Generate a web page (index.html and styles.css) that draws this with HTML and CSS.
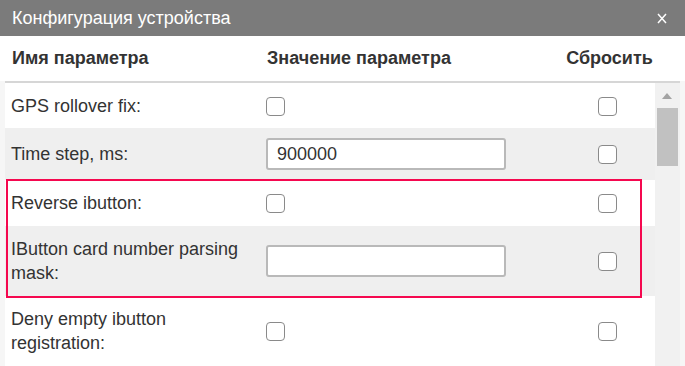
FILE: index.html
```html
<!DOCTYPE html>
<html lang="ru">
<head>
<meta charset="utf-8">
<title>Конфигурация устройства</title>
<link rel="stylesheet" href="styles.css">
</head>
<body>
<div class="dialog">
  <div class="titlebar">
    <span class="title">Конфигурация устройства</span>
    <svg class="close" width="10" height="11" viewBox="0 0 10 11"><path d="M1 1 L9 10 M9 1 L1 10" stroke="#fff" stroke-width="1.5" fill="none"/></svg>
  </div>
  <div class="colhead">
    <div class="ch-name">Имя параметра</div>
    <div class="ch-value">Значение параметра</div>
    <div class="ch-reset">Сбросить</div>
  </div>
  <div class="body">
    <div class="panel">
      <div class="rows">
        <div class="row first">
          <div class="label">GPS rollover fix:</div>
          <div class="value"><span class="cb"></span></div>
          <div class="reset"><span class="cb"></span></div>
        </div>
        <div class="row alt input-row">
          <div class="label">Time step, ms:</div>
          <div class="value"><div class="input">900000</div></div>
          <div class="reset"><span class="cb"></span></div>
        </div>
        <div class="row">
          <div class="label">Reverse ibutton:</div>
          <div class="value"><span class="cb"></span></div>
          <div class="reset"><span class="cb"></span></div>
        </div>
        <div class="row alt">
          <div class="label">IButton card number parsing mask:</div>
          <div class="value"><div class="input"></div></div>
          <div class="reset"><span class="cb"></span></div>
        </div>
        <div class="row">
          <div class="label">Deny empty ibutton registration:</div>
          <div class="value"><span class="cb"></span></div>
          <div class="reset"><span class="cb"></span></div>
        </div>
        <div class="highlight"></div>
      </div>
      <div class="scrollbar">
        <div class="arrow"></div>
        <div class="thumb"></div>
      </div>
    </div>
  </div>
</div>
</body>
</html>
```
FILE: styles.css
```css
html, body {
  margin: 0;
  padding: 0;
  height: 366px;
  overflow: hidden;
  background: #ffffff;
}
.dialog {
  width: 685px;
  height: 366px;
  display: flex;
  flex-direction: column;
  font-family: "Liberation Sans", Arial, sans-serif;
  color: #333333;
}
.titlebar {
  height: 36px;
  flex: none;
  background: #7b7b7b;
  display: flex;
  align-items: center;
  justify-content: space-between;
  padding: 0 18px 0 12px;
}
.title {
  color: #ffffff;
  font-family: "Liberation Sans", Arial, sans-serif;
  font-size: 18px;
  white-space: nowrap;
}
.close {
  display: block;
  margin-top: 1px;
}
.colhead {
  height: 45px;
  flex: none;
  display: grid;
  grid-template-columns: 261px 294px 95px;
  align-items: center;
  padding-left: 5px;
  font-family: "Liberation Sans", Arial, sans-serif;
  font-weight: 700;
  font-size: 18px;
  color: #333333;
}
.ch-name { padding-left: 7px; }
.ch-value { padding-left: 1px; }
.ch-reset { text-align: center; padding-left: 4px; white-space: nowrap; }
.body {
  flex: 1;
  background: #f6f6f6;
  padding: 0 5px;
  min-height: 0;
}
.panel {
  height: 100%;
  border-top: 2px solid #d6d6d6;
  display: flex;
}
.rows {
  flex: 1;
  position: relative;
  background: #ffffff;
}
.row {
  display: grid;
  grid-template-columns: 261px 294px 95px;
  align-items: center;
  padding: 11px 0;
  line-height: 24px;
  font-size: 18px;
  background: #ffffff;
}
.row.first { padding: 11px 0 10px; }
.row.alt { background: #efefef; }
.row.input-row { padding: 10px 0; }
.label {
  padding-left: 6px;
  padding-right: 10px;
}
.value, .reset {
  display: flex;
  align-items: center;
}
.reset { justify-content: center; }
.cb {
  display: block;
  width: 19px;
  height: 19px;
  box-sizing: border-box;
  border: 1px solid #8a8a8a;
  border-radius: 4px;
  background: #ffffff;
}
.input {
  width: 240px;
  height: 32px;
  box-sizing: border-box;
  border: 2px solid #b9b9b9;
  border-radius: 3px;
  background: #ffffff;
  padding-left: 9px;
  line-height: 28px;
  font-size: 18px;
  color: #333333;
}
.highlight {
  position: absolute;
  left: 1px;
  top: 96px;
  width: 636px;
  height: 119px;
  box-sizing: border-box;
  border: 2px solid #f5084f;
  pointer-events: none;
}
.scrollbar {
  width: 25px;
  flex: none;
  background: #f1f1f1;
  display: flex;
  flex-direction: column;
  align-items: flex-start;
}
.arrow {
  width: 0;
  height: 0;
  margin: 10px 0 0 7px;
  border-left: 5.5px solid transparent;
  border-right: 5.5px solid transparent;
  border-bottom: 6px solid #a3a3a3;
}
.thumb {
  margin: 9px 0 0 2px;
  width: 21px;
  height: 58px;
  background: #c1c1c1;
}
```
